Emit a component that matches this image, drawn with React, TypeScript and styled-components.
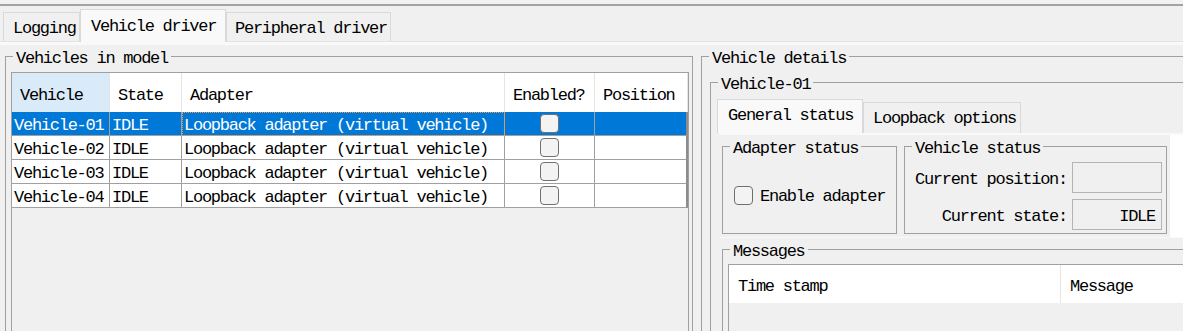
import styled, { createGlobalStyle } from "styled-components";

const GlobalStyle = createGlobalStyle`
  html, body {
    margin: 0;
    padding: 0;
  }
  body {
    background: #f0f0f0;
    color: #000;
    font-family: "Liberation Mono", "DejaVu Sans Mono", monospace;
    font-size: 17px;
    letter-spacing: -1.26px;
  }
`;

const VEHICLES = [
  { name: "Vehicle-01", state: "IDLE", adapter: "Loopback adapter (virtual vehicle)", position: "" },
  { name: "Vehicle-02", state: "IDLE", adapter: "Loopback adapter (virtual vehicle)", position: "" },
  { name: "Vehicle-03", state: "IDLE", adapter: "Loopback adapter (virtual vehicle)", position: "" },
  { name: "Vehicle-04", state: "IDLE", adapter: "Loopback adapter (virtual vehicle)", position: "" },
];

const COLUMNS = ["Vehicle", "State", "Adapter", "Enabled?", "Position"];
const GRID = "98px 72px 323px 90px 93px";

function App() {
  const selected = 0;
  return (
    <Window>
      <GlobalStyle />
      <TopRule />
      <MainTabs>
        <Tab $width={77} $pad={9}>Logging</Tab>
        <Tab $width={146} $pad={10} $selected>
          Vehicle driver
        </Tab>
        <Tab $width={165} $pad={8}>Peripheral driver</Tab>
      </MainTabs>
      <MainPane>
        <Split>
          <LeftBox>
            <Legend $offset={2}>Vehicles in model</Legend>
            <VehicleTable>
              <HeaderRow>
                {COLUMNS.map((c, i) => (
                  <HeaderCell key={c} $sorted={i === 0}>
                    {c}
                  </HeaderCell>
                ))}
              </HeaderRow>
              {VEHICLES.map((v, i) => (
                <Row key={v.name} $selected={i === selected}>
                  <Cell>{v.name}</Cell>
                  <Cell>{v.state}</Cell>
                  <Cell $focused={i === selected}>{v.adapter}</Cell>
                  <Cell $center>
                    <CheckBox />
                  </Cell>
                  <Cell $last>{v.position}</Cell>
                </Row>
              ))}
            </VehicleTable>
          </LeftBox>

          <DetailsBox>
            <Legend $offset={-1}>Vehicle details</Legend>
            <VehicleBox>
              <Legend $offset={1}>Vehicle-01</Legend>
              <InnerTabs>
                <InnerTab $width={146} $pad={10} $selected>
                  General status
                </InnerTab>
                <InnerTab $width={158} $pad={9}>Loopback options</InnerTab>
              </InnerTabs>
              <InnerPane>
                <StatusPanel>
                  <AdapterBox>
                    <Legend $offset={-4}>Adapter status</Legend>
                    <CheckLabel>
                      <CheckBox />
                      <span>Enable adapter</span>
                    </CheckLabel>
                  </AdapterBox>
                  <StatusBox>
                    <Legend $offset={-1}>Vehicle status</Legend>
                    <FieldGrid>
                      <FieldLabel>Current position:</FieldLabel>
                      <Field />
                      <FieldLabel>Current state:</FieldLabel>
                      <Field>IDLE</Field>
                    </FieldGrid>
                  </StatusBox>
                </StatusPanel>
              </InnerPane>
              <MessagesBox>
                <Legend $offset={2}>Messages</Legend>
                <MessageTable>
                  <MessageHeader>
                    <MessageHead>Time stamp</MessageHead>
                    <MessageHead>Message</MessageHead>
                  </MessageHeader>
                </MessageTable>
              </MessagesBox>
            </VehicleBox>
          </DetailsBox>
        </Split>
      </MainPane>
    </Window>
  );
}
export default App;

const Window = styled.div`
  width: 1183px;
  height: 331px;
  overflow: hidden;
  background: #f0f0f0;
`;

const TopRule = styled.div`
  height: 4px;
  background: #f2f2f2;
  border-bottom: 2px solid #a3a3a3;
`;

const MainTabs = styled.div`
  display: flex;
  align-items: flex-end;
  height: 35px;
  padding-left: 3px;
`;

const Tab = styled.div<{ $width: number; $pad: number; $selected?: boolean }>`
  position: relative;
  z-index: ${(p) => (p.$selected ? 1 : 0)};
  box-sizing: border-box;
  width: ${(p) => p.$width}px;
  height: ${(p) => (p.$selected ? 33 : 29)}px;
  margin-bottom: ${(p) => (p.$selected ? -1 : 0)}px;
  padding: ${(p) => (p.$selected ? "1px 0 0" : "2px 0 0")};
  padding-left: ${(p) => p.$pad}px;
  display: flex;
  align-items: center;
  white-space: nowrap;
  background: ${(p) => (p.$selected ? "#f9f9f9" : "#f0f0f0")};
  border: 1px solid #d9d9d9;
  border-bottom: none;
`;

const MainPane = styled.div`
  border-top: 1px solid #e3e3e3;
  &::before {
    content: "";
    display: block;
    height: 3px;
    background: #f9f9f9;
  }
`;

const Split = styled.div`
  display: flex;
  align-items: flex-start;
  padding-left: 5px;
`;

const Box = styled.fieldset`
  margin: 0;
  min-width: 0;
  box-sizing: border-box;
  border: 1px solid #a0a0a0;
`;

const Legend = styled.legend<{ $offset: number }>`
  margin-left: ${(p) => p.$offset}px;
  padding: 5px 3px 0;
  line-height: 17px;
  white-space: nowrap;
`;

const LeftBox = styled(Box)`
  flex: 0 0 auto;
  width: 688px;
  height: 300px;
  padding: 5px 3px 0 5px;
`;

const VehicleTable = styled.div`
  box-sizing: border-box;
  width: 678px;
  height: 280px;
  border: 1px solid #a0a0a0;
  background: #f0f0f0;
`;

const HeaderRow = styled.div`
  display: grid;
  grid-template-columns: ${GRID};
  height: 39px;
  background: #fff;
`;

const HeaderCell = styled.div<{ $sorted?: boolean }>`
  display: flex;
  align-items: center;
  padding: 5px 0 0 8px;
  border-right: 1px solid #e5e5e5;
  background: ${(p) => (p.$sorted ? "#d9ebf9" : "#fff")};
  white-space: nowrap;
  overflow: hidden;
`;

const Row = styled.div<{ $selected?: boolean }>`
  display: grid;
  grid-template-columns: ${GRID};
  height: 24px;
  background: ${(p) => (p.$selected ? "#0078d7" : "#fff")};
  color: ${(p) => (p.$selected ? "#fff" : "#000")};
`;

const Cell = styled.div<{ $center?: boolean; $focused?: boolean; $last?: boolean }>`
  box-sizing: border-box;
  display: flex;
  align-items: center;
  justify-content: ${(p) => (p.$center ? "center" : "flex-start")};
  padding: ${(p) => (p.$center ? "0" : "4px 0 0 2px")};
  border-right: ${(p) => (p.$last ? "2px solid #8c8c8c" : "1px solid #a0a0a0")};
  border-bottom: 1px solid #a0a0a0;
  white-space: nowrap;
  overflow: hidden;
  outline: ${(p) => (p.$focused ? "1px dotted #ff9a3c" : "none")};
  outline-offset: -1px;
`;

const CheckBox = styled.span`
  box-sizing: border-box;
  display: inline-block;
  flex: 0 0 auto;
  width: 19px;
  height: 19px;
  border: 1px solid #707070;
  border-radius: 4px;
  background: #f3f3f3;
`;

const DetailsBox = styled(Box)`
  flex: 0 0 auto;
  width: 520px;
  height: 300px;
  margin-left: 8px;
  padding: 4px 0 0 8px;
`;

const VehicleBox = styled(Box)`
  height: 280px;
  padding: 6px 0 0 6px;
`;

const InnerTabs = styled.div`
  display: flex;
  align-items: flex-end;
  height: 34px;
`;

const InnerTab = styled(Tab)`
  height: ${(p) => (p.$selected ? 34 : 31)}px;
  margin-bottom: 0;
  padding-top: 0;
  padding-bottom: ${(p) => (p.$selected ? 2 : 0)}px;
`;

const InnerPane = styled.div`
  margin-left: 2px;
  background: #fff;
  border-top: 2px solid #f9f9f9;
  border-bottom: 1px solid #f9f9f9;
`;

const StatusPanel = styled.div`
  display: flex;
  align-items: stretch;
  gap: 7px;
  width: 451px;
  box-sizing: border-box;
  padding: 0 3px 3px 3px;
  background: #f0f0f0;
`;

const AdapterBox = styled(Box)`
  width: 175px;
  padding: 0 0 0 11px;
  display: flex;
  align-items: center;
`;

const CheckLabel = styled.label`
  display: flex;
  align-items: center;
  gap: 7px;
  white-space: nowrap;

  span {
    padding-top: 2px;
  }
`;

const StatusBox = styled(Box)`
  width: 263px;
  padding: 5px 4px 3px 8px;
`;

const FieldGrid = styled.div`
  display: grid;
  grid-template-columns: 1fr 90px;
  column-gap: 5px;
  row-gap: 6px;
  align-items: center;
`;

const FieldLabel = styled.span`
  padding-top: 3px;
  text-align: right;
  white-space: nowrap;
`;

const Field = styled.div`
  box-sizing: border-box;
  height: 31px;
  padding: 3px 6px 0 0;
  display: flex;
  align-items: center;
  justify-content: flex-end;
  border: 1px solid #b4b4b4;
  background: #f0f0f0;
`;

const MessagesBox = styled(Box)`
  height: 120px;
  margin-left: 5px;
  padding: 4px 0 0 5px;
`;

const MessageTable = styled.div`
  height: 100px;
  border: 1px solid #a0a0a0;
  border-right: none;
  background: #f0f0f0;
`;

const MessageHeader = styled.div`
  display: grid;
  grid-template-columns: 332px 1fr;
  height: 38px;
  background: #fff;
`;

const MessageHead = styled.div`
  display: flex;
  align-items: center;
  padding: 4px 0 0 9px;
  border-right: 1px solid #e5e5e5;
  white-space: nowrap;
`;
